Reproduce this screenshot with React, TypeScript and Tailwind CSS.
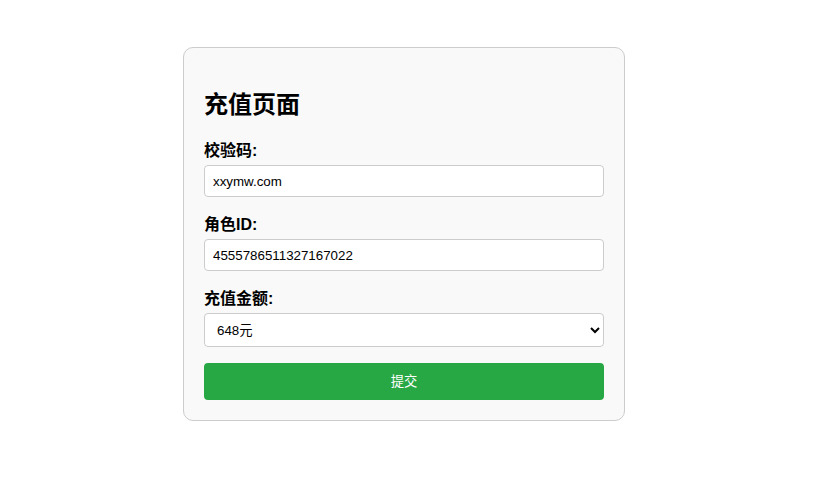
export default function App() {
  return (
    <div className="min-h-[478px] bg-white pt-[47px] font-['Liberation_Sans','Noto_Sans_CJK_SC',sans-serif] text-black">
      <div className="ml-[183px] w-[442px] rounded-[10px] border border-[#cccccc] bg-[#f9f9f9] p-5">
        <h2 className="mt-[23px] mb-[21px] h-[28px] text-[24px] font-bold leading-[28px]">充值页面</h2>
        <form onSubmit={(e) => e.preventDefault()}>
          <label className="mb-[5px] block h-[20px] text-[16px] font-bold leading-[21px]">校验码:</label>
          <input
            type="text"
            defaultValue="xxymw.com"
            className="mb-[17px] block h-[32px] w-full rounded-[4px] border border-[#cccccc] bg-white px-[8px] text-[13.333px] outline-none"
          />
          <label className="mb-[5px] block h-[20px] text-[16px] font-bold leading-[21px]">角色ID:</label>
          <input
            type="text"
            defaultValue="4555786511327167022"
            className="mb-[17px] block h-[32px] w-full rounded-[4px] border border-[#cccccc] bg-white px-[8px] text-[13.333px] outline-none"
          />
          <label className="mb-[5px] block h-[20px] text-[16px] font-bold leading-[21px]">充值金额:</label>
          <select
            defaultValue="648"
            className="mb-[16px] block h-[34px] w-full rounded-[4px] border border-[#cccccc] bg-white px-[8px] text-[13.333px] outline-none"
          >
            <option value="6">6元</option>
            <option value="30">30元</option>
            <option value="68">68元</option>
            <option value="128">128元</option>
            <option value="328">328元</option>
            <option value="648">648元</option>
          </select>
          <button
            type="submit"
            className="block h-[37px] w-full rounded-[4px] bg-[#28a745] text-[13.333px] text-white"
          >
            提交
          </button>
        </form>
      </div>
    </div>
  );
}
